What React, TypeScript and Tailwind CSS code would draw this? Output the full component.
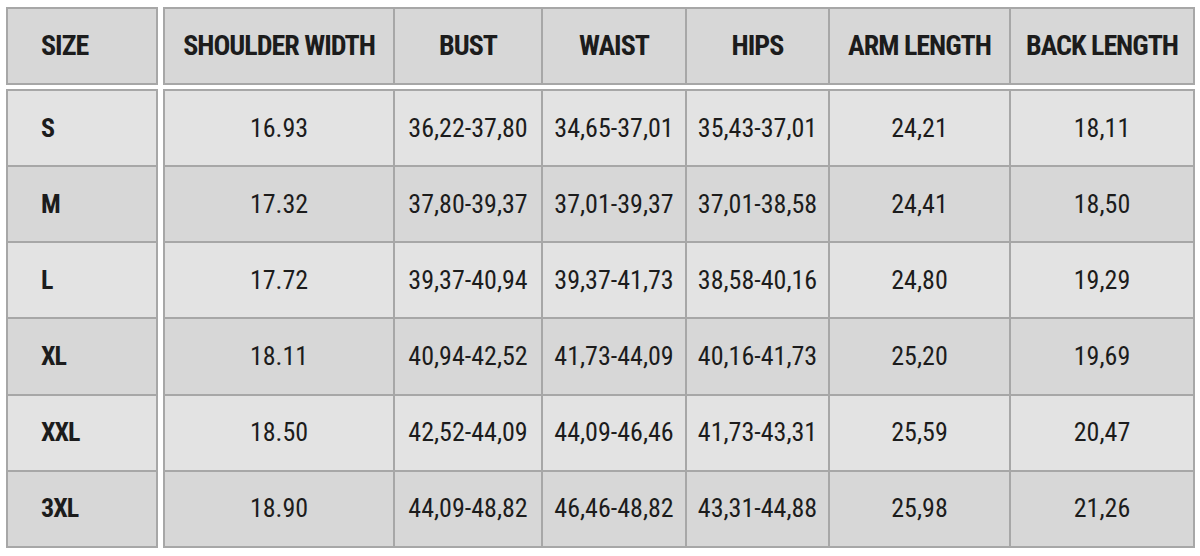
import React from "react";

const headers = ["SHOULDER WIDTH", "BUST", "WAIST", "HIPS", "ARM LENGTH", "BACK LENGTH"];
const rows: { size: string; vals: string[] }[] = [
  { size: "S", vals: ["16.93", "36,22-37,80", "34,65-37,01", "35,43-37,01", "24,21", "18,11"] },
  { size: "M", vals: ["17.32", "37,80-39,37", "37,01-39,37", "37,01-38,58", "24,41", "18,50"] },
  { size: "L", vals: ["17.72", "39,37-40,94", "39,37-41,73", "38,58-40,16", "24,80", "19,29"] },
  { size: "XL", vals: ["18.11", "40,94-42,52", "41,73-44,09", "40,16-41,73", "25,20", "19,69"] },
  { size: "XXL", vals: ["18.50", "42,52-44,09", "44,09-46,46", "41,73-43,31", "25,59", "20,47"] },
  { size: "3XL", vals: ["18.90", "44,09-48,82", "46,46-48,82", "43,31-44,88", "25,98", "21,26"] },
];

const cols = "grid-cols-[228px_146px_142px_141px_179px_182px]";

export default function App() {
  return (
    <div className="w-[1200px] h-[556px] bg-white pl-[6px] pt-[7px] font-['Roboto',sans-serif] font-stretch-condensed text-[#1c1c1c] whitespace-nowrap">
      <div className="grid grid-cols-[152px_1032px] grid-rows-[78px_459px] gap-x-[5px] gap-y-[4px]">
        <div className="bg-[#a7a7a7] p-[2px]">
          <div className="h-full bg-[#d7d7d7] flex items-center pl-[33px] text-[28px] font-bold tracking-[-1px]">
            SIZE
          </div>
        </div>
        <div className={`bg-[#a7a7a7] p-[2px] grid ${cols} gap-[2px]`}>
          {headers.map((h) => (
            <div
              key={h}
              className="bg-[#d7d7d7] flex items-center justify-center text-[28px] font-bold tracking-[-1px]"
            >
              {h}
            </div>
          ))}
        </div>
        <div className="bg-[#a7a7a7] p-[2px] grid grid-rows-6 gap-[2px]">
          {rows.map((r, i) => (
            <div
              key={r.size}
              className={`${i % 2 === 0 ? "bg-[#e3e3e3]" : "bg-[#d7d7d7]"} flex items-center pl-[33px] text-[26px] font-bold tracking-[-1px]`}
            >
              {r.size}
            </div>
          ))}
        </div>
        <div className={`bg-[#a7a7a7] p-[2px] grid ${cols} grid-rows-6 gap-[2px]`}>
          {rows.map((r, i) =>
            r.vals.map((v, j) => (
              <div
                key={`${r.size}-${j}`}
                className={`${i % 2 === 0 ? "bg-[#e3e3e3]" : "bg-[#d7d7d7]"} flex items-center justify-center text-[26px] font-normal`}
              >
                {v}
              </div>
            ))
          )}
        </div>
      </div>
    </div>
  );
}
